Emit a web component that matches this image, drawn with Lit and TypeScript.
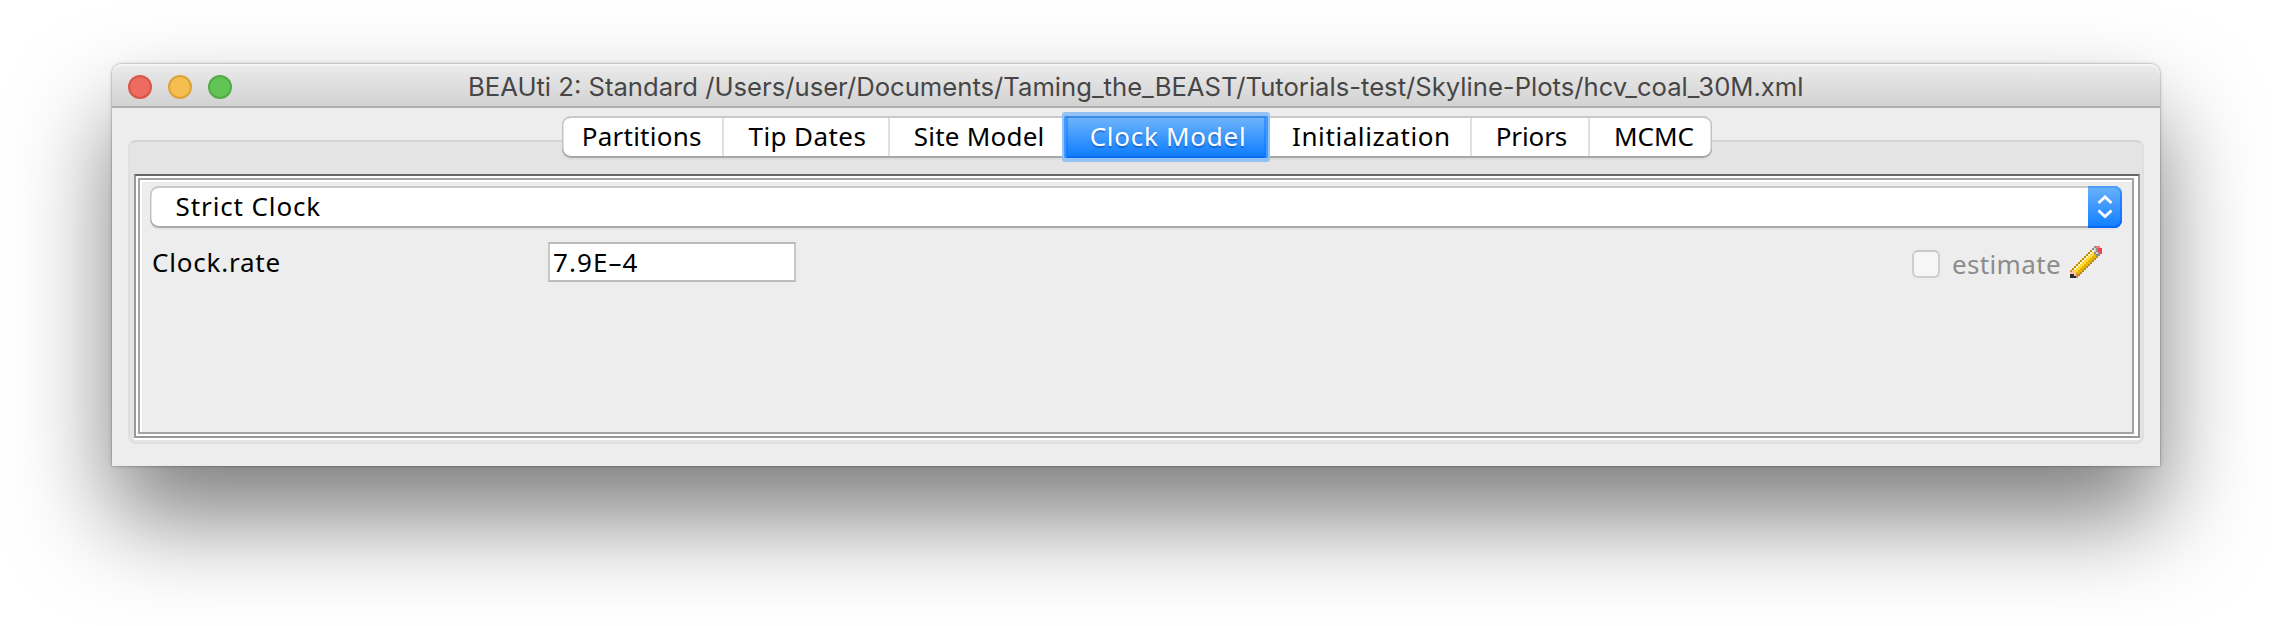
import { LitElement, html, svg, css } from 'lit';
import { customElement, property } from 'lit/decorators.js';
import { classMap } from 'lit/directives/class-map.js';
import { styleMap } from 'lit/directives/style-map.js';

interface Tab { label: string; width: number; pad: number; spacing: number; selected?: boolean; }

const TABS: Tab[] = [
  { label: 'Partitions', width: 162, pad: 19.7, spacing: 0.25 },
  { label: 'Tip Dates', width: 166, pad: 24.5, spacing: 0.42 },
  { label: 'Site Model', width: 176, pad: 23.8, spacing: 0.22 },
  { label: 'Clock Model', width: 200, pad: 23.7, spacing: 0.73 },
  { label: 'Initialization', width: 206, pad: 26, spacing: 0.6 },
  { label: 'Priors', width: 118, pad: 23.7, spacing: -0.1 },
  { label: 'MCMC', width: 122, pad: 24, spacing: 0 },
];
TABS[3].selected = true;

/* 16x16 pixel-art pencil, one character per pixel */
const PENCIL = [
  '............gpp.',
  '...........glgrr',
  '..........nwlgrr',
  '.........nwyglgr',
  '........nwyyogg.',
  '.......nwyyoon..',
  '......nwyyoon...',
  '.....nwyyoon....',
  '....nwyyoon.....',
  '...nwyyoon......',
  '..nwyyoon.......',
  '.nwyyoon........',
  'tsyyoon.........',
  'sssoon..........',
  'kkstn...........',
  'kkkt............',
];
const INK: Record<string, string> = {
  g: '#8e8e90', l: '#cfcfd2', p: '#ee7d7d', r: '#e8484c', n: '#c08c0c', w: '#fff6c4',
  y: '#fbd93a', o: '#e6b400', s: '#fbc4a4', t: '#d98262', k: '#2e2e30',
};

@customElement('pencil-icon')
class PencilIcon extends LitElement {
  static styles = css`
    :host { display: block; width: 32px; height: 32px; }
    .art { display: block; width: 100%; height: 100%; }
  `;
  render() {
    return html`<svg class="art" viewBox="0 0 16 16" shape-rendering="crispEdges">
      ${PENCIL.flatMap((row, y) => [...row].map((c, x) =>
        c === '.' ? null : svg`<rect x=${x} y=${y} width="1" height="1" fill=${INK[c]}></rect>`))}
    </svg>`;
  }
}

@customElement('title-bar')
class TitleBar extends LitElement {
  @property() heading = '';
  static styles = css`
    :host { display: block; }
    .bar {
      box-sizing: border-box; height: 44px; padding: 0 16px;
      display: grid; grid-template-columns: 340px 1fr; align-items: center;
      border-radius: 10px 10px 0 0;
      background: linear-gradient(#ebebeb, #d1d1d1);
      box-shadow: inset 0 2px #f6f6f6, inset 0 -2px #b1b1b1;
    }
    .lights { display: flex; gap: 16px; }
    .light { box-sizing: border-box; width: 24px; height: 24px; border-radius: 50%; border: 2px solid; }
    .close { background: #ed6b60; border-color: #d95548; }
    .min { background: #f5be4f; border-color: #dca23b; }
    .max { background: #61c454; border-color: #52ab43; }
    .title {
      padding-top: 1px; font: 25.65px/44px Inter, sans-serif; color: #464646; white-space: nowrap;
    }
  `;
  render() {
    return html`<div class="bar">
      <div class="lights">
        <span class="light close"></span><span class="light min"></span><span class="light max"></span>
      </div>
      <div class="title">${this.heading}</div>
    </div>`;
  }
}

@customElement('tab-strip')
class TabStrip extends LitElement {
  static styles = css`
    :host { display: block; position: relative; z-index: 1; }
    .strip {
      box-sizing: border-box; display: flex; width: 1150px; height: 42px;
      border-radius: 9px; background: #fff;
      box-shadow: inset 0 2px #c9c9c9, inset 0 -2px #a6a6a6, inset 1.5px 0 #c2c2c2, inset -1.5px 0 #c2c2c2, 0 2px #dedede;
    }
    .tab {
      box-sizing: border-box; flex: none; height: 42px;
      font: 26px/40px "Noto Sans", sans-serif; color: #000; white-space: pre;
    }
    .divided { background: linear-gradient(#e0e0e0, #e0e0e0) right 2px / 2px 38px no-repeat; }
    .selected {
      color: #fff; text-shadow: 0 2px 1px rgba(0, 40, 120, .35);
      background: linear-gradient(#3b8ce8 0 2px, #6cb3fb 2px, #0f7eff 40px, #0a6cf5 40px);
      box-shadow: inset 2px 0 rgba(20, 120, 255, .5), inset -2px 0 rgba(20, 120, 255, .5),
        -2px 0 #3f9aff, 2px 0 #3f9aff, 0 0 0 4px #94c2f3;
      border-radius: 1px;
    }
  `;
  render() {
    return html`<div class="strip">${TABS.map((t, i) => html`<div
      class=${classMap({ tab: true, selected: !!t.selected, divided: [0, 1, 4, 5].includes(i) })}
      style=${styleMap({ width: `${t.width}px`, paddingLeft: `${t.pad}px`, letterSpacing: `${t.spacing}px` })}
      >${t.label}</div>`)}</div>`;
  }
}

@customElement('app-root')
class AppRoot extends LitElement {
  static styles = css`
    :host {
      display: block; box-sizing: border-box; width: 2272px; height: 626px; overflow: hidden;
      padding: 64px 112px 0; background: #fff;
      font: 26px/40px "Noto Sans", sans-serif; color: #000;
    }
    .window {
      width: 2048px; height: 402px; background: #ededed; border-radius: 10px 10px 0 0;
      box-shadow: 0 0 0 1px rgba(0, 0, 0, .09), 0 0 4px rgba(0, 0, 0, .2), 0 52px 96px rgba(0, 0, 0, .51);
    }
    .body { padding: 8px 16px 0; }
    .tabs { display: block; margin-left: 434px; }
    .panel {
      box-sizing: border-box; height: 304px; margin-top: -18px; padding: 32px 2px 0 4px;
      border: 2px solid #dfdfdf; border-top-color: #d5d5d5; border-radius: 8px; background: #e4e4e4;
    }
    .outer {
      box-sizing: border-box; height: 264px; padding: 2px 4px 2px 2px; background: #fff;
      border: 2px solid #989898; border-top-color: #666; box-shadow: 0 2px #fff;
    }
    .inner {
      box-sizing: border-box; height: 256px; padding: 6px 10px 0 10px;
      border: 2px solid #a3a3a3; background: #ededed; box-shadow: inset 2px 2px #fff;
    }
    .combo {
      display: flex; justify-content: space-between; height: 42px; border-radius: 9px; background: #fff;
      box-shadow: inset 0 2px #c9c9c9, inset 0 -2px #a9a9a9, inset 1.5px 0 #c2c2c2, 0 2px #e3e3e3;
    }
    .choice { padding-left: 25.6px; letter-spacing: .88px; }
    .stepper {
      display: grid; place-items: center; width: 34px; height: 42px; border-radius: 0 8px 8px 0;
      background: linear-gradient(#6bb2fb, #0f7eff);
      box-shadow: inset 0 2px #4b9df8, inset -2px 0 rgba(10, 100, 255, .55), inset 0 -2px #0a66f5;
    }
    .chevrons { width: 16px; height: 24px; fill: none; stroke: #fff; stroke-width: 2.8; }
    .row {
      display: grid; grid-template-columns: 398px 248px 1fr; height: 40px; margin-top: 14px;
    }
    .name { padding-left: 2px; letter-spacing: .78px; }
    .field {
      box-sizing: border-box; height: 40px; padding-left: 3px; line-height: 36px; letter-spacing: 1.06px;
      background: #fff; border: 2px solid #bcbcbc; border-left-color: #c6c6c6; border-right-color: #c6c6c6;
    }
    .options { display: flex; justify-content: flex-end; padding-right: 20px; }
    .check {
      box-sizing: border-box; width: 28px; height: 28px; margin: 8px 12px 0 0;
      border: 2px solid #cdcdcd; border-top-color: #c8c8c8; border-radius: 6px; background: #f6f6f6;
    }
    .estimate { width: 118px; padding-top: 2px; color: #8c8c8c; letter-spacing: .35px; }
    .edit { margin-top: 4px; }
  `;
  render() {
    return html`<div class="window">
      <title-bar heading="BEAUti 2: Standard /Users/user/Documents/Taming_the_BEAST/Tutorials-test/Skyline-Plots/hcv_coal_30M.xml"></title-bar>
      <div class="body">
        <tab-strip class="tabs"></tab-strip>
        <div class="panel"><div class="outer"><div class="inner">
          <div class="combo">
            <span class="choice">Strict Clock</span>
            <span class="stepper">
              <svg class="chevrons" viewBox="0 0 16 24"><path d="M1.5 8 8 2l6.5 6M1.5 15.500 8 21.500l6.500-6"/></svg>
            </span>
          </div>
          <div class="row">
            <span class="name">Clock.rate</span>
            <div class="field">7.9E–4</div>
            <div class="options">
              <span class="check"></span>
              <span class="estimate">estimate</span>
              <pencil-icon class="edit"></pencil-icon>
            </div>
          </div>
        </div></div></div>
      </div>
    </div>`;
  }
}
